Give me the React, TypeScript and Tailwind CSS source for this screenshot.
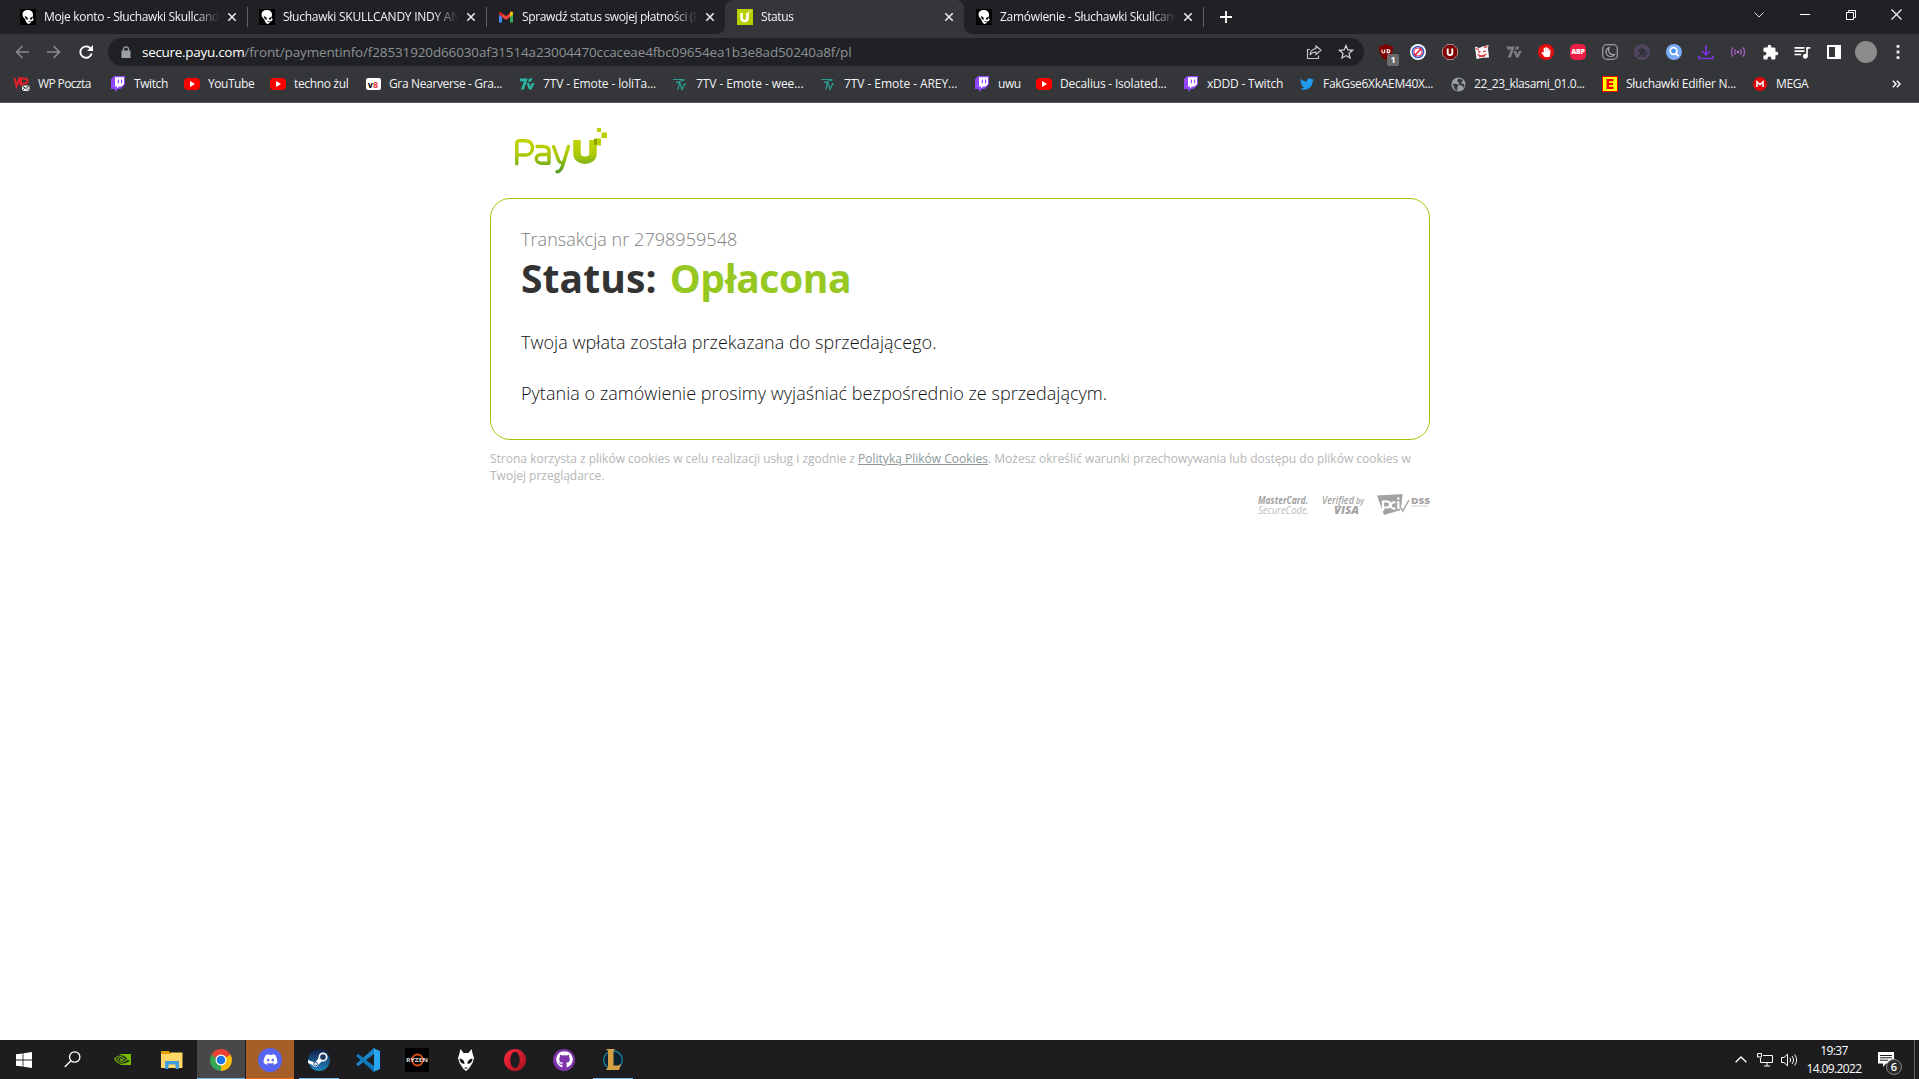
import React from "react";
import { FaTwitter, FaDiscord, FaGithub, FaHandPaper } from "react-icons/fa";
import { SiNvidia } from "react-icons/si";
import { MdQueueMusic, MdExtension } from "react-icons/md";

const ui = "font-['Open_Sans','Noto_Sans',sans-serif]";

function Skull() {
  return (
    <svg width="16" height="16" viewBox="0 0 16 16" className="shrink-0">
      <rect width="16" height="16" fill="#000" />
      <path d="M2.500 5.500C2.500 2.500 4.500 1 7.500 1 11 1 13 3 13 5.500c0 1.500-.2 2.200-.8 3l1.600 1.700-1 1.800-1.800.5-.7 1.800-2.300.7-1.800-2-1.200-3C3.500 8.500 2.500 7.500 2.500 5.500z" fill="#fff" />
      <path d="M4.500 6.800l3 1.700.5 2.200-2-.4zM9.800 9.300l2.400-1.500v2.400l-1.700.5zM8.500 12.300h2v.8h-2z" fill="#000" />
    </svg>
  );
}

function Gmail() {
  return (
    <svg width="16" height="16" viewBox="0 0 16 16" className="shrink-0">
      <path d="M1 4v9.500h3V7z" fill="#4285f4" />
      <path d="M15 4v9.500h-3V7z" fill="#34a853" />
      <path d="M12 4.500V8l3-2.200V4c0-1.800-1.800-2-3-1z" fill="#fbbc04" />
      <path d="M1 4v1.800L4 8V4.500L3 3C2 2.200 1 2.800 1 4z" fill="#c5221f" />
      <path d="M4 4l4 3.200L12 4v4l-4 3-4-3z" fill="#ea4335" />
    </svg>
  );
}

function PayUIcon() {
  return (
    <svg width="16" height="16" viewBox="0 0 16 16" className="shrink-0">
      <rect width="16" height="16" fill="#b9cf00" />
      <path d="M4.500 4v5c0 4 6 4 6 0V4" fill="none" stroke="#fff" strokeWidth="2.600" />
      <path d="M11 3h1.500v1.500H11zM13 1.500h1.200v1.200H13z" fill="#fff" />
    </svg>
  );
}

function Close() {
  return (
    <svg width="10" height="10" viewBox="0 0 10 10" className="shrink-0">
      <path d="M1.300 1.300l7.400 7.400M8.700 1.300l-7.400 7.400" stroke="#e8eaed" strokeWidth="1.600" />
    </svg>
  );
}

const tabs = [
  { icon: <Skull />, title: "Moje konto - Słuchawki Skullcandy", ls: "tracking-[-0.32px]" },
  { icon: <Skull />, title: "Słuchawki SKULLCANDY INDY ANC", ls: "tracking-[-0.25px]" },
  { icon: <Gmail />, title: "Sprawdź status swojej płatności (P", ls: "tracking-[-0.37px]" },
  { icon: <PayUIcon />, title: "Status", ls: "tracking-[-0.4px]", active: true },
  { icon: <Skull />, title: "Zamówienie - Słuchawki Skullcandy", ls: "tracking-[-0.3px]" },
];

function TabStrip() {
  return (
    <div className="flex h-[34px] bg-[#202124] pl-2">
      {tabs.map((t, i) => (
        <div
          key={i}
          className={`relative flex w-[239px] items-center pl-3 pr-[10px] ${t.active ? "rounded-t-lg bg-[#35363a]" : ""}`}
        >
          {t.icon}
          <div
            className={`ml-2 h-[18px] w-[175px] overflow-hidden whitespace-nowrap text-[12px] leading-[18px] text-[#f1f3f4] [mask-image:linear-gradient(to_right,#000_150px,transparent_176px)] ${t.ls}`}
          >
            {t.title}
          </div>
          <div className="ml-2">
            <Close />
          </div>
          {(i < 2 || i === 4) && <div className="absolute -right-px top-[7px] h-5 w-px bg-[#5f6368]" />}
          {t.active && (
            <>
              <div className="absolute -left-2 bottom-0 size-2 bg-[radial-gradient(circle_at_0_0,#202124_7.500px,#35363a_8px)]" />
              <div className="absolute -right-2 bottom-0 size-2 bg-[radial-gradient(circle_at_100%_0,#202124_7.500px,#35363a_8px)]" />
            </>
          )}
        </div>
      ))}
      <div className="flex w-[46px] items-center justify-center">
        <svg width="12" height="12" viewBox="0 0 12 12">
          <path d="M6 0v12M0 6h12" stroke="#fff" strokeWidth="1.800" />
        </svg>
      </div>
      <div className="ml-auto flex h-[29px] items-center">
        <div className="flex w-[46px] justify-center">
          <svg width="10" height="6" viewBox="0 0 10 6"><path d="M.5.5L5 5 9.500.5" fill="none" stroke="#ddd" /></svg>
        </div>
        <div className="flex w-[46px] justify-center"><div className="h-px w-[10px] bg-white" /></div>
        <div className="flex w-[46px] justify-center">
          <svg width="10" height="10" viewBox="0 0 10 10"><path d="M.5 2.500h7v7h-7zM2.500 2.500v-2h7v7h-2" fill="none" stroke="#fff" /></svg>
        </div>
        <div className="flex w-[45px] justify-center">
          <svg width="11" height="11" viewBox="0 0 11 11"><path d="M.5.5l10 10M10.500.5l-10 10" stroke="#fff" strokeWidth="1.100" /></svg>
        </div>
      </div>
    </div>
  );
}

function SevenTv({ color }: { color: string }) {
  return (
    <svg width="16" height="16" viewBox="0 0 16 16">
      <path d="M.5 2.500h8.200L5 13.500H1.800L5 5.500H1.500zM7.500 7h2.700l1.200 3.500L13 7h2.700l-3.200 6.500H10zM10 2.500h3.500L12 5.800H9z" fill={color} />
    </svg>
  );
}

function Extensions() {
  const items = [
    <div className="relative">
      <svg width="16" height="16" viewBox="0 0 16 16">
        <path d="M8 0c2 1.500 4.500 2 7 2 0 6-1 10.500-7 14C2 12.500 1 8 1 2c2.500 0 5-.5 7-2z" fill="#800000" />
        <path d="M4 5.500v2.200c0 1.700 2.700 1.700 2.700 0V5.500M9.200 5.500v3.300c3.500 0 3.500-3.300 0-3.300z" fill="none" stroke="#fff" strokeWidth="1.100" />
      </svg>
      <div className="absolute left-[9px] top-[10px] flex h-[12px] w-[12px] items-center justify-center rounded-[2px] bg-[#6b6b6b] text-[9px] font-bold text-white">1</div>
    </div>,
    <svg width="16" height="16" viewBox="0 0 16 16">
      <circle cx="8" cy="8" r="8" fill="#fff" />
      <circle cx="8" cy="8" r="5.600" fill="none" stroke="#3557c8" strokeWidth="1.500" />
      <path d="M11.500 4.500l-7 7" stroke="#d8213b" strokeWidth="1.700" />
      <circle cx="8" cy="8" r="4" fill="none" stroke="#d8213b" strokeWidth="1.100" />
    </svg>,
    <svg width="16" height="16" viewBox="0 0 16 16">
      <path d="M5 .5h6L15.500 5v6L11 15.500H5L.5 11V5z" fill="#800000" stroke="#b9aaaa" strokeWidth=".8" />
      <path d="M5.700 4.500v4.200c0 3 4.600 3 4.600 0V4.500" fill="none" stroke="#fff" strokeWidth="1.900" />
    </svg>,
    <svg width="16" height="16" viewBox="0 0 16 16">
      <path d="M1 2.500L5 4l4-1.500L14.500 1l-.5 4 1 8.500-6.500.3L2.500 15z" fill="#fff" />
      <path d="M2 4.500l3 1.200M10 3.500l3.500-.8M4 7.500l2.500.5M9 7.700l3-.5M3.500 10.500c2.500 2 6.500 1.500 9-.5M5 12.500l6-.5" fill="none" stroke="#e23b3b" strokeWidth="1.300" />
    </svg>,
    <SevenTv color="#7d7d80" />,
    <div className="flex size-4 items-center justify-center rounded-full bg-[#e40d0d] text-white"><FaHandPaper size={10} /></div>,
    <div className="flex size-4 items-center justify-center rounded-[5px] bg-[#ed1e45] text-[7px] font-extrabold tracking-[-0.2px] text-white">ABP</div>,
    <svg width="16" height="16" viewBox="0 0 16 16">
      <rect x=".7" y=".7" width="14.600" height="14.600" rx="4" fill="none" stroke="#9a9a9d" strokeWidth="1.300" />
      <path d="M7 3.500c-4.500 2-3.500 9 2 9 2 0 3-1 3.500-2-5 1-7-3.500-5.500-7z" fill="none" stroke="#a5a5a8" strokeWidth="1.200" />
    </svg>,
    <div className="flex size-4 items-center justify-center rounded-full bg-[#50465f] text-[#35333d]"><MdExtension size={11} /></div>,
    <svg width="16" height="16" viewBox="0 0 16 16">
      <circle cx="8" cy="8" r="8" fill="#79a9f8" />
      <circle cx="7.500" cy="7" r="3.300" fill="#4a8df8" stroke="#fff" strokeWidth="1.700" />
      <path d="M10 9.500l2.500 2.500" stroke="#fff" strokeWidth="1.800" />
    </svg>,
    <svg width="16" height="16" viewBox="0 0 16 16">
      <path d="M8 1v9.500M4 7l4 4 4-4M1 12v2.500h14V12" fill="none" stroke="#7a35d8" strokeWidth="1.700" />
    </svg>,
    <svg width="16" height="16" viewBox="0 0 16 16">
      <circle cx="8" cy="8" r="1.300" fill="#b46ad0" />
      <path d="M5.800 5.500c-1.400 1.500-1.400 3.500 0 5M10.200 5.500c1.400 1.500 1.400 3.500 0 5M3.200 3.500c-2.400 2.500-2.400 6.500 0 9M12.800 3.500c2.400 2.500 2.400 6.500 0 9" fill="none" stroke="#a35fc0" strokeWidth="1.300" />
    </svg>,
    <MdExtension size={17} color="#fff" />,
    <MdQueueMusic size={20} color="#fff" />,
    <svg width="14" height="14" viewBox="0 0 14 14"><path d="M0 0h14v14H0zM2 2v10h6V2z" fill="#fff" fillRule="evenodd" /></svg>,
    <div className="size-[22px] rounded-full bg-[#8c8c8c]" />,
    <svg width="4" height="14" viewBox="0 0 4 14"><path d="M.6 0h2.800v2.800H.6zM.6 5.600h2.800v2.800H.6zM.6 11.200h2.800V14H.6z" fill="#e8eaed" /></svg>,
  ];
  return (
    <div className="ml-[6px] flex">
      {items.map((el, i) => (
        <div key={i} className="flex w-8 items-center justify-center">{el}</div>
      ))}
    </div>
  );
}

function Toolbar() {
  return (
    <div className="flex h-9 items-center bg-[#35363a] pl-[6px]">
      <div className="flex w-8 justify-center">
        <svg width="14" height="14" viewBox="0 0 14 14"><path d="M14 7H1.500M7.500 1L1.500 7l6 6" fill="none" stroke="#8a8b8e" strokeWidth="1.600" /></svg>
      </div>
      <div className="flex w-8 justify-center">
        <svg width="14" height="14" viewBox="0 0 14 14"><path d="M0 7h12.500M6.500 1l6 6-6 6" fill="none" stroke="#8a8b8e" strokeWidth="1.600" /></svg>
      </div>
      <div className="flex w-8 justify-center">
        <svg width="14" height="14" viewBox="0 0 14 14">
          <path d="M11.500 3.500A5.700 5.700 0 1 0 12.600 8.500" fill="none" stroke="#fff" strokeWidth="1.900" />
          <path d="M14 0v6H8z" fill="#fff" />
        </svg>
      </div>
      <div className="ml-[6px] flex h-7 w-[1256px] items-center rounded-full bg-[#202124] pl-[13px] pr-[10px]">
        <svg width="10" height="12" viewBox="0 0 10 12">
          <path d="M0.500 4.500h9V12h-9z" fill="#9aa0a6" />
          <path d="M2.500 5V3.200C2.500 0 7.500 0 7.500 3.200V5" fill="none" stroke="#9aa0a6" strokeWidth="1.300" />
        </svg>
        <div className="ml-[11px] whitespace-nowrap text-[13.500px] tracking-[-0.14px] text-[#8d9196]">
          <span className="tracking-[-0.3px] text-white">secure.payu.com</span>/front/paymentinfo/f28531920d66030af31514a23004470ccaceae4fbc09654ea1b3e8ad50240a8f/pl
        </div>
        <svg className="ml-auto" width="16" height="16" viewBox="0 0 16 16">
          <path d="M4 5.500H1.500v9h11v-3" fill="none" stroke="#c4c6c9" strokeWidth="1.200" />
          <path d="M10 2l5 4.200-5 4.200V8c-3 0-4.700 1-6 3 .3-3.500 2.500-6 6-6.500z" fill="none" stroke="#c4c6c9" strokeWidth="1.200" />
        </svg>
        <svg className="ml-4" width="16" height="16" viewBox="0 0 16 16">
          <path d="M8 1.500l1.900 4.400 4.700.4-3.600 3.100 1.100 4.700L8 11.600l-4.100 2.500L5 9.400 1.400 6.300l4.700-.4z" fill="none" stroke="#d5d7da" strokeWidth="1.200" />
        </svg>
      </div>
      <Extensions />
    </div>
  );
}

const yt = (
  <div className="flex h-3 w-4 items-center justify-center rounded-[4px] bg-[#f00]">
    <svg width="5" height="6" viewBox="0 0 5 6"><path d="M0 0l5 3-5 3z" fill="#fff" /></svg>
  </div>
);
const twitch = (
  <svg width="16" height="16" viewBox="0 0 16 16">
    <path d="M4.500 0L1 3v10h4v3l3-3h2.500L15 8.500V0z" fill="#9146ff" />
    <path d="M5 1.200h9V8l-2.500 2.500H9l-2 2v-2H5z" fill="#fff" />
    <path d="M7.800 3.500H9v3.800H7.800zM11 3.500h1.200v3.800H11z" fill="#9146ff" />
  </svg>
);
const seven = (
  <svg width="16" height="16" viewBox="0 0 16 16">
    <path d="M1 3.500h11.500M4 6.500L12.500 4M5 6.500h2.500L6 13.500M8 7l2 6.500L13 7M13 7v2" fill="none" stroke="#2a9d8f" strokeWidth="1.200" />
  </svg>
);

const bookmarks = [
  {
    w: "w-[96px]", ls: "tracking-[-0.6px]", t: "WP Poczta",
    i: (
      <svg width="16" height="16" viewBox="0 0 16 16">
        <path d="M.5 2l2 8L5 3l2 7V2.500h3.500c4 0 4 5 0 5H8" fill="none" stroke="#e3202a" strokeWidth="2" />
        <path d="M8 9.500h7.500v5.500H8z" fill="#eee" /><path d="M8 9.500l3.700 3 3.800-3M8 15l2.500-2.500M15.500 15L13 12.500" fill="none" stroke="#222" />
      </svg>
    ),
  },
  { w: "w-[74px]", ls: "tracking-[-0.4px]", t: "Twitch", i: twitch },
  { w: "w-[86px]", ls: "tracking-[-0.45px]", t: "YouTube", i: yt },
  { w: "w-[95px]", ls: "tracking-[-0.35px]", t: "techno żul", i: yt },
  {
    w: "w-[154px]", ls: "tracking-[-0.35px]", t: "Gra Nearverse - Gra...",
    i: (
      <div className="flex h-3 w-[15px] items-center justify-center rounded-[2px] bg-white text-[9px] font-bold leading-none tracking-normal text-black">
        v<span className="text-[#e8392b]">8</span>
      </div>
    ),
  },
  { w: "w-[153px]", ls: "tracking-[-0.12px]", t: "7TV - Emote - loliTa...", i: <SevenTv color="#2bb5a5" /> },
  { w: "w-[148px]", ls: "tracking-[-0.08px]", t: "7TV - Emote - wee...", i: seven },
  { w: "w-[154px]", ls: "tracking-[-0.06px]", t: "7TV - Emote - AREY...", i: seven },
  { w: "w-[62px]", ls: "tracking-[-0.4px]", t: "uwu", i: twitch },
  { w: "w-[147px]", ls: "tracking-[-0.2px]", t: "Decalius - Isolated...", i: yt },
  { w: "w-[116px]", ls: "tracking-[-0.2px]", t: "xDDD - Twitch", i: twitch },
  { w: "w-[151px]", ls: "tracking-[-0.3px]", t: "FakGse6XkAEM40X...", i: <FaTwitter size={14} color="#1d9bf0" /> },
  {
    w: "w-[152px]", ls: "tracking-[-0.4px]", t: "22_23_klasami_01.0...",
    i: (
      <svg width="15" height="15" viewBox="0 0 15 15">
        <circle cx="7.500" cy="7.500" r="7" fill="#9aa0a6" />
        <path d="M1.500 6.500L6 7l1.500 2L6 10.500 6.500 14 4 12.500zM7.500 1.500L6 4.200l2 1.500-.5 2 4 1 .5 1.800 1.500-.5-.5-3-3-.5L12 3z" fill="#35363a" />
      </svg>
    ),
  },
  {
    w: "w-[150px]", ls: "tracking-[-0.27px]", t: "Słuchawki Edifier N...",
    i: (
      <svg width="16" height="16" viewBox="0 0 16 16">
        <rect width="16" height="16" fill="#e00" /><rect x="1" y="1" width="14" height="14" fill="#ff0" />
        <path d="M4.500 3h7v2.200H7v1.700h4v2.200H7v1.700h4.500V13h-7z" fill="#e00" />
      </svg>
    ),
  },
  {
    w: "w-[80px]", ls: "tracking-[-0.4px]", t: "MEGA",
    i: (
      <svg width="14" height="14" viewBox="0 0 14 14">
        <circle cx="7" cy="7" r="7" fill="#d9090e" />
        <path d="M4 10V4.800l3 3 3-3V10" fill="none" stroke="#fff" strokeWidth="1.500" />
      </svg>
    ),
  },
];

function Bookmarks() {
  return (
    <div className="flex h-8 items-center bg-[#35363a] pb-1 pl-[14px] text-[12px] text-[#f1f3f4]">
      {bookmarks.map((b, k) => (
        <div key={k} className={`flex shrink-0 items-center whitespace-nowrap ${b.w} ${b.ls}`}>
          <div className="mr-2 flex w-4 shrink-0 justify-center">{b.i}</div>
          {b.t}
        </div>
      ))}
      <svg className="ml-auto mr-[18px]" width="9" height="8" viewBox="0 0 9 8">
        <path d="M.8.8L4 4 .8 7.200M4.800.8L8 4 4.800 7.200" fill="none" stroke="#fff" strokeWidth="1.400" />
      </svg>
    </div>
  );
}

function PayULogo() {
  return (
    <svg width="92" height="46" viewBox="0 0 92 46" className="ml-[25px]">
      <defs>
        <linearGradient id="lime" x1="0" y1="10" x2="0" y2="46" gradientUnits="userSpaceOnUse">
          <stop offset="0" stopColor="#c3d500" /><stop offset=".45" stopColor="#aeca06" /><stop offset="1" stopColor="#4c9a2a" />
        </linearGradient>
      </defs>
      <g fill="none" stroke="url(#lime)" strokeWidth="3.400" strokeLinecap="round" strokeLinejoin="round">
        <path d="M1.800 35.700V15.500c0-2 1-2.800 2.800-2.800h6.200c9 0 9 14.300 0 14.300H2" />
        <path d="M22 18.500h6c4.500 0 6 1.800 6 5v11.700H26.500c-7 0-7-8.700 0-8.700H34" />
        <path d="M38.500 18.500l5 13.500c1 2.600 1.800 3 4.500 3M53.500 18.500L48 36.500c-1.500 5-3 7.200-6 7.200" />
      </g>
      <path d="M62 12v13.500c0 9 16 9 16 0V12" fill="none" stroke="url(#lime)" strokeWidth="7.500" />
      <path d="M79 10.500h7v7h-7zM86.500 4.500H92V10h-5.500zM82 0h4v4h-4z" fill="#bccf00" />
      <path d="M79 11h3v6h-3z" fill="#8aa600" />
    </svg>
  );
}

function Badges() {
  return (
    <svg width="173" height="21" viewBox="0 0 173 21" className="ml-auto" fontFamily="Open Sans, sans-serif" fill="#a3a3a3">
      <text x="1" y="9.500" fontSize="10.500" fontWeight="700" fontStyle="italic" textLength="50" lengthAdjust="spacingAndGlyphs">MasterCard.</text>
      <text x="1" y="19.500" fontSize="10.500" fontStyle="italic" fill="#bdbdbd" textLength="51" lengthAdjust="spacingAndGlyphs">SecureCode.</text>
      <text x="65" y="9.500" fontSize="10.500" fontStyle="italic" fontWeight="600" textLength="32" lengthAdjust="spacingAndGlyphs">Verified</text>
      <text x="99" y="9.500" fontSize="9" fontStyle="italic" fontWeight="600" textLength="8" lengthAdjust="spacingAndGlyphs">by</text>
      <text x="77" y="19.500" fontSize="11" fontStyle="italic" fontWeight="800" textLength="25" lengthAdjust="spacingAndGlyphs">VISA</text>
      <path d="M120 1.500L145.500 0 144 16l-17 5z" />
      <path d="M126 17V7.500h4.500c3.200 0 3.200 6 0 6h-4M138.500 8.500c-5.500-1.800-7 7 0 6M141.300 7v8M141.300 3.500v2" fill="none" stroke="#fff" strokeWidth="2.200" />
      <path d="M143 12l2.800 4.500 6-10.500" fill="none" stroke="#fff" strokeWidth="3" />
      <path d="M143 12l2.800 5 6.200-11" fill="none" stroke="#a3a3a3" strokeWidth="1.400" />
      <text x="154" y="9.500" fontSize="8" fontWeight="800" textLength="19" lengthAdjust="spacingAndGlyphs">DSS</text>
      <path d="M154 12h17" stroke="#cfcfcf" strokeWidth="1" />
    </svg>
  );
}

function Page() {
  return (
    <main className="h-[937px] bg-white pl-[490px]">
      <div className="flex w-[940px] flex-col pt-[25px]">
        <PayULogo />
        <section className="mt-6 h-[242px] rounded-[20px] border border-[#a6c307] px-[30px] text-[18px] font-light tracking-[0.04px] text-[#111]">
          <p className="mt-[28px] leading-6 tracking-[0.05px] text-[#808080]">Transakcja nr 2798959548</p>
          <h1 className="mt-[3px] text-[39px] font-bold leading-[48px] tracking-[0.1px] text-[#333]">
            Status:<span className="ml-[13px] tracking-[-0.4px] text-[#96c821]">Opłacona</span>
          </h1>
          <p className="mt-[28px] leading-6">Twoja wpłata została przekazana do sprzedającego.</p>
          <p className="mt-[27px] leading-6">Pytania o zamówienie prosimy wyjaśniać bezpośrednio ze sprzedającym.</p>
        </section>
        <p className="mt-[10px] text-[12px] leading-[17px] text-[#b6b6b6]">
          Strona korzysta z plików cookies w celu realizacji usług i zgodnie z{" "}
          <a className="text-[#8c999c] underline">Polityką Plików Cookies</a>. Możesz określić warunki przechowywania lub dostępu do plików cookies w Twojej przeglądarce.
        </p>
        <div className="mt-[10px] flex"><Badges /></div>
      </div>
    </main>
  );
}

function Chrome() {
  return (
    <svg width="24" height="24" viewBox="0 0 24 24">
      <path d="M12 12L2.500 6.500A11 11 0 0 1 21.500 6.500z" fill="#ea4335" />
      <path d="M12 12l9.500-5.500A11 11 0 0 1 12 23z" fill="#fbbc04" />
      <path d="M12 12V23A11 11 0 0 1 2.500 6.500z" fill="#34a853" />
      <path d="M12 6.500h9.500L12 12zM7.500 15L2.500 6.500 12 12z" fill="#ea4335" />
      <path d="M7.200 14.800L2.500 6.500 9 12z" fill="#34a853" />
      <path d="M16.500 14.500L12 23v-8z" fill="#fbbc04" />
      <circle cx="12" cy="12" r="5.500" fill="#fff" /><circle cx="12" cy="12" r="4.300" fill="#1a73e8" />
    </svg>
  );
}

function Taskbar() {
  const apps: { el: React.ReactNode; bg?: string; line?: string }[] = [
    {
      el: <svg width="16" height="16" viewBox="0 0 16 16" className="mr-[3px]"><path d="M0 2.300l6.600-.9v6.200H0zM7.400 1.300L16 0v7.600H7.400zM0 8.400h6.600v6.200L0 13.700zM7.400 8.400H16V16l-8.600-1.200z" fill="#fff" /></svg>,
    },
    {
      el: <svg width="17" height="17" viewBox="0 0 17 17" className="mr-1"><circle cx="10.700" cy="6" r="5.200" fill="none" stroke="#fff" strokeWidth="1.300" /><path d="M6.900 9.800L.8 16" stroke="#fff" strokeWidth="1.400" /></svg>,
    },
    { el: <SiNvidia size={17} color="#76b900" className="mr-[2px]" /> },
    {
      el: (
        <svg width="22" height="20" viewBox="0 0 22 20">
          <path d="M0 1h8l1.500 2H21v15H0z" fill="#e0a100" /><path d="M0 4h9l1-1.500h11.500V18H0z" fill="#ffd869" />
          <path d="M4 19v-8h14v8h-3.500v-4.500h-7V19z" fill="#3f9ee0" />
        </svg>
      ),
    },
    { el: <Chrome />, bg: "bg-[#48484a]", line: "w-12 bg-[#76b9ed]" },
    {
      el: <div className="flex size-6 items-center justify-center rounded-full bg-[#5865f2] text-white"><FaDiscord size={15} /></div>,
      bg: "bg-[#a65f28]", line: "w-12 bg-[#f76b0a]",
    },
    {
      el: (
        <svg width="22" height="22" viewBox="0 0 22 22">
          <defs>
            <linearGradient id="steam" x1="0" y1="0" x2="0" y2="1">
              <stop offset="0" stopColor="#111d45" /><stop offset="1" stopColor="#1c86bd" />
            </linearGradient>
          </defs>
          <circle cx="11" cy="11" r="11" fill="url(#steam)" />
          <path d="M0 11l7 2.500 5-6 3.500 3.500-5 4.500c-1 3-5 3-6 .5L0 14z" fill="#fff" />
          <circle cx="15" cy="8" r="3.700" fill="#1a3560" stroke="#fff" strokeWidth="1.700" />
          <circle cx="7.600" cy="15" r="1.800" fill="none" stroke="#1d4d80" />
        </svg>
      ),
      line: "w-10 bg-[#76b9ed]",
    },
    {
      el: (
        <svg width="24" height="24" viewBox="0 0 24 24">
          <path d="M18 0L0 16l2 2.200L18 6z" fill="#1b84c8" /><path d="M18 24L0 8l2-2.200L18 18z" fill="#0f76b8" />
          <path d="M17 0l7 3v18l-7 3 1-1.500V1.500z" fill="#2aa5ef" />
        </svg>
      ),
    },
    {
      el: (
        <svg width="24" height="24" viewBox="0 0 24 24">
          <rect width="24" height="24" fill="#000" /><circle cx="12.500" cy="12" r="5.500" fill="none" stroke="#d9521c" strokeWidth="1.800" />
          <text x="1" y="13.800" fontSize="5" fontWeight="700" fill="#ddd" textLength="22" lengthAdjust="spacingAndGlyphs" fontFamily="Open Sans, sans-serif">RYZEN</text>
        </svg>
      ),
    },
    {
      el: (
        <svg width="18" height="22" viewBox="0 0 18 22">
          <path d="M3.500 0L6.500 4h5L14.500 0l1.500 6 1 3-1.500 5-4 6-2.500 2-2.500-2-4-6L1 9l1-3z" fill="#fff" />
          <path d="M2.500 9.500c3 .5 5 2 5 5.500-3-.3-5-2-5-5.500zM15.500 9.500c-3 .5-5 2-5 5.500 3-.3 5-2 5-5.500zM7.500 18.500h3v.9h-3z" fill="#111" />
        </svg>
      ),
    },
    {
      el: (
        <svg width="22" height="22" viewBox="0 0 22 22">
          <defs>
            <linearGradient id="opera" x1="0" y1="0" x2="1" y2="1">
              <stop offset="0" stopColor="#ff2a3f" /><stop offset="1" stopColor="#a3101c" />
            </linearGradient>
          </defs>
          <circle cx="11" cy="11" r="11" fill="url(#opera)" /><ellipse cx="11" cy="11" rx="4.700" ry="8.300" fill="#1d1d20" />
        </svg>
      ),
    },
    { el: <div className="flex size-[22px] items-center justify-center rounded-full bg-[#8034a9] text-white"><FaGithub size={17} /></div> },
    {
      el: (
        <svg width="22" height="24" viewBox="0 0 22 24">
          <circle cx="11" cy="12" r="9.300" fill="#0b2230" stroke="#197f95" strokeWidth="1.400" />
          <path d="M4 1h9l-1.500 2v14.500h4.500l3-1.500-2 6H4l2-3V3z" fill="#d5a144" />
        </svg>
      ),
      line: "w-10 bg-[#76b9ed]",
    },
  ];
  return (
    <footer className="flex h-[39px] bg-[#1d1d1f]">
      <div className="flex gap-px pl-px">
        {apps.map((a, i) => (
          <div key={i} className={`relative flex h-[39px] w-12 items-center justify-center ${a.bg ?? ""}`}>
            {a.el}
            {a.line && <div className={`absolute bottom-0 h-px ${a.line}`} />}
          </div>
        ))}
      </div>
      <div className="ml-auto flex items-center text-white">
        <svg width="12" height="7" viewBox="0 0 12 7"><path d="M.6 6.300L6 1l5.400 5.300" fill="none" stroke="#fff" strokeWidth="1.300" /></svg>
        <svg className="ml-[10px]" width="16" height="14" viewBox="0 0 16 14"><path d="M6 2.500h9.500v7H3.500V5M7 13h6M10 9.500V13M.5.5h4V4h-4z" fill="none" stroke="#fff" /></svg>
        <svg className="ml-2" width="17" height="14" viewBox="0 0 17 14"><path d="M.5 4.500H3l3.500-3.300v11.600L3 9.500H.5zM8.800 4.800c1 1.300 1 3.100 0 4.400M11 3c2 2.400 2 5.600 0 8M13.500 1.500c2.800 3.300 2.800 7.700 0 11" fill="none" stroke="#fff" /></svg>
        <div className="ml-[5px] w-[62px] whitespace-nowrap text-center text-[12px] leading-[18px] tracking-[-0.6px]">19:37<br />14.09.2022</div>
        <div className="relative ml-[13px] w-7">
          <svg width="16" height="15" viewBox="0 0 16 15"><path d="M0 0h16v11.500H8L5 15v-3.500H0z" fill="#fff" /><path d="M2 3.500h12M2 5.800h12M2 8.200h8" stroke="#1d1d1f" /></svg>
          <div className="absolute left-[8px] top-[7px] flex size-4 items-center justify-center rounded-full border border-[#888] bg-[#2b2b2d] text-[11px] font-semibold">6</div>
        </div>
        <div className="mr-1 ml-[8px] h-[39px] w-px bg-[#666]" />
      </div>
    </footer>
  );
}

export default function App() {
  return (
    <div className={`h-[1079px] w-[1919px] overflow-hidden bg-white ${ui}`}>
      <TabStrip />
      <Toolbar />
      <Bookmarks />
      <div className="h-px bg-[#5c5d60]" />
      <Page />
      <Taskbar />
    </div>
  );
}
